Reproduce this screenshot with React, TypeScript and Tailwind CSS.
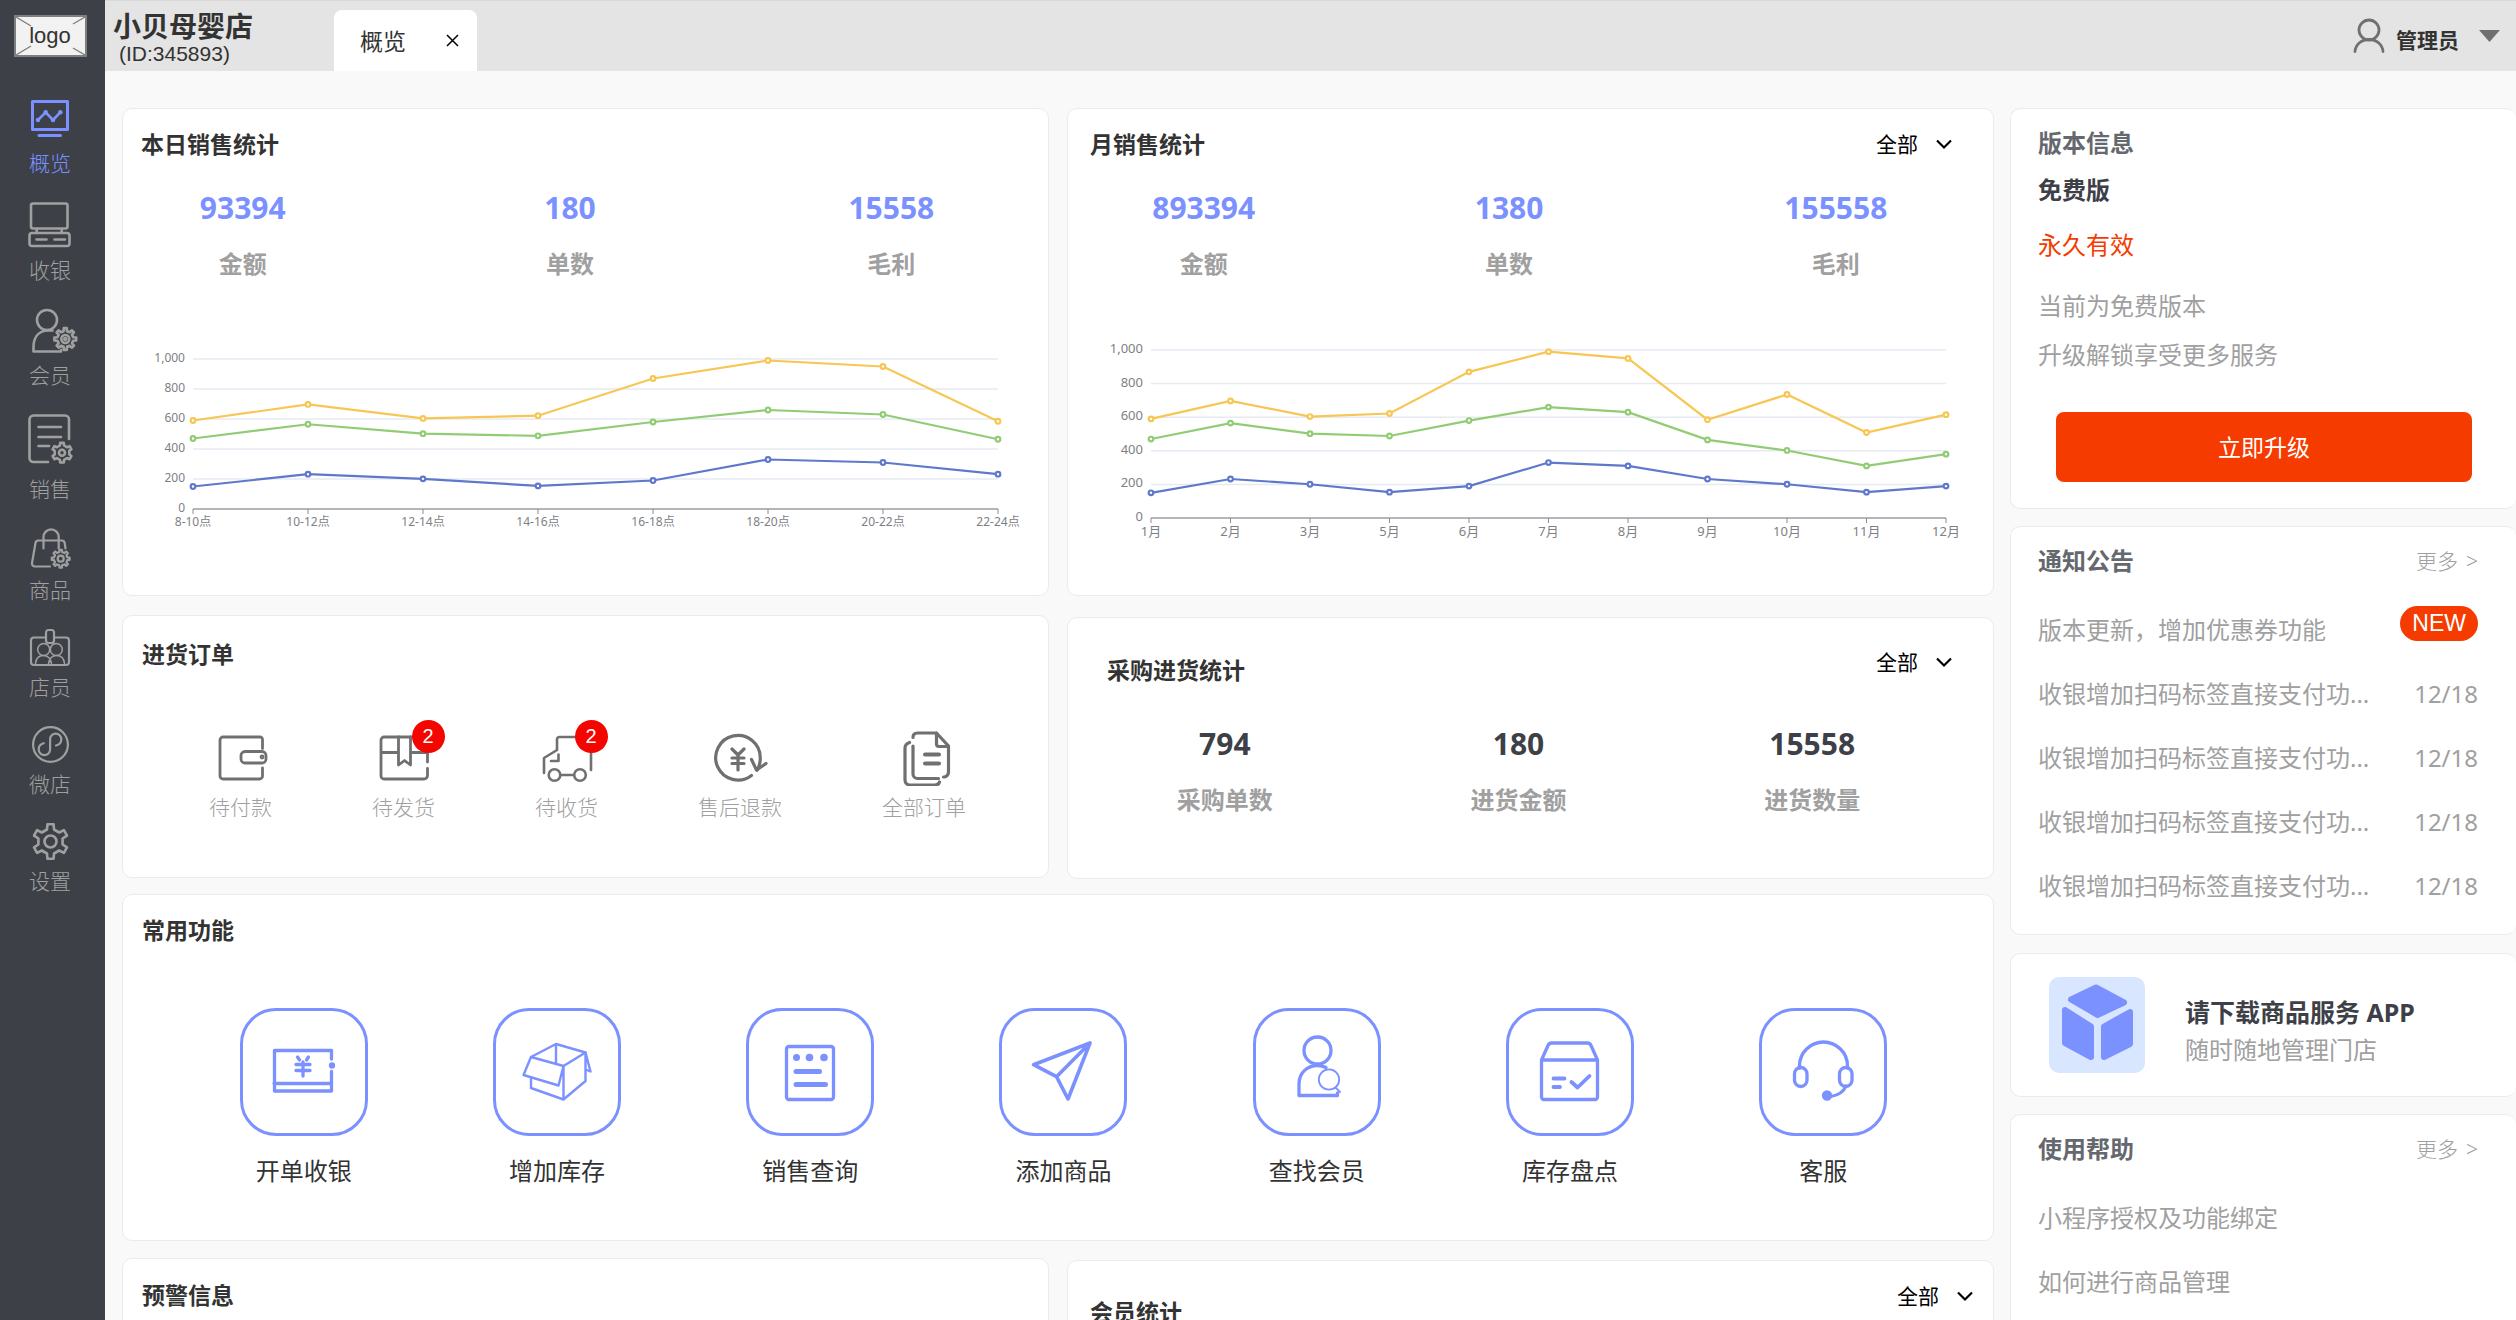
import type { ReactNode } from "react";

// Outline of a cog, one flat tooth per step
const gearPath = (
  cx: number,
  cy: number,
  outer: number,
  inner: number,
  teeth: number
) => {
  const step = (Math.PI * 2) / teeth;
  const points: string[] = [];
  for (let i = 0; i < teeth; i++) {
    const a = i * step - Math.PI / 2;
    const corners = [
      [inner, -0.27],
      [outer, -0.17],
      [outer, 0.17],
      [inner, 0.27],
    ];
    corners.forEach(([r, k]) => {
      const x = cx + r * Math.cos(a + k * step);
      const y = cy + r * Math.sin(a + k * step);
      points.push(`${x.toFixed(1)} ${y.toFixed(1)}`);
    });
  }
  return `M${points.join("L")}Z`;
};

const menus = [
  {
    name: "概览",
    height: 42,
    icon: (
      <>
        <path d="M8.5 1.5h35v28h-35z" strokeWidth="3" />
        <path d="M15 35.5h21.5" strokeWidth="3" />
        <path d="M14 20l7.7-7.7L29 20l7.3-7.7" />
        <g fill="currentColor" stroke="none">
          <circle cx="14" cy="20" r="2.3" />
          <circle cx="21.7" cy="12.3" r="2.3" />
          <circle cx="29" cy="20" r="2.3" />
          <circle cx="36.3" cy="12.3" r="2.3" />
        </g>
      </>
    ),
  },
  {
    name: "收银",
    height: 47,
    icon: (
      <>
        <rect x="7" y="1.5" width="36.5" height="25" rx="2" />
        <rect x="5.5" y="31" width="40" height="13" rx="2.5" />
        <path d="M12.7 27v4M37.7 27v4M12.5 37.5h10M30.5 37.5H41" />
      </>
    ),
  },
  {
    name: "会员",
    height: 45,
    icon: (
      <>
        <circle cx="23" cy="11" r="10" />
        <path d="M37 41v1.5H9.5V38c0-9.500 5-15.5 13-16.5h6" />
        <path d={gearPath(41.3, 30, 11, 8, 8)} />
        <circle cx="41.3" cy="30" r="4" />
        <circle cx="41.3" cy="30" r="1" />
      </>
    ),
  },
  {
    name: "销售",
    height: 54,
    icon: (
      <>
        <path d="M45 25V5.5a4 4 0 0 0-4-4H9.5a4 4 0 0 0-4 4V44a4 4 0 0 0 4 4H24" />
        <path d="M14.5 13H37M14.5 23H37M14.5 32H25" />
        <path d={gearPath(38, 38.7, 10, 7.5, 6)} />
        <circle cx="38" cy="38.7" r="3" />
      </>
    ),
  },
  {
    name: "商品",
    height: 41,
    icon: (
      <g strokeWidth="2.2">
        <path d="M41.5 20.5l-.8-5.5a3 3 0 0 0-3-2.5H14.5a3 3 0 0 0-3 2.5L8 35a3 3 0 0 0 3 3.5h15" />
        <path d="M19.5 20.5V9a7.6 7.6 0 0 1 15.2 0v11.5" />
        <path d={gearPath(36.7, 30.7, 9, 6.8, 8)} />
        <circle cx="36.7" cy="30.7" r="3" />
      </g>
    ),
  },
  {
    name: "店员",
    height: 37,
    icon: (
      <g strokeWidth="2.2">
        <path d="M21.5 8.5H10a3 3 0 0 0-3 3V33a3 3 0 0 0 3 3h32a3 3 0 0 0 3-3V11.5a3 3 0 0 0-3-3H30.5" />
        <rect x="22" y="1" width="8" height="13" rx="2.5" />
        <g strokeWidth="1.5">
          <circle cx="19.7" cy="20.5" r="6" />
          <circle cx="32.3" cy="20.5" r="6" />
          <path d="M11.5 34.5c.5-5 3.5-8 8-8s7 3 8 8M24.5 34.5c1-5 3.5-8 8-8s7.500 3 8 8" />
        </g>
      </g>
    ),
  },
  {
    name: "微店",
    height: 37,
    icon: (
      <g strokeWidth="2.2">
        <circle cx="26.5" cy="18.5" r="17.4" />
        <path d="M32 19.5c3.3-.8 5.3-3.3 5.3-6.3a5.6 5.6 0 0 0-11.2 0v10.3a5.7 5.7 0 0 1-11.4 0c0-3.2 1.800-5.5 5-6.3" />
      </g>
    ),
  },
  {
    name: "设置",
    height: 37,
    icon: (
      <>
        <path d={gearPath(26.5, 18.5, 17.5, 12.5, 6)} />
        <circle cx="26.5" cy="18.5" r="6" />
      </>
    ),
  },
];

const blue = [150, 232, 201, 154, 190, 330, 310, 232];
const green = [470, 565, 502, 488, 580, 660, 630, 465];
const yellow = [590, 697, 604, 622, 870, 990, 950, 585];

const dayChart = {
  labels: [
    "8-10点",
    "10-12点",
    "12-14点",
    "14-16点",
    "16-18点",
    "18-20点",
    "20-22点",
    "22-24点",
  ],
  series: [
    { color: "#5f78cb", data: blue },
    { color: "#91cc75", data: green },
    { color: "#f7c653", data: yellow },
  ],
};

const monthChart = {
  labels: [
    "1月",
    "2月",
    "3月",
    "5月",
    "6月",
    "7月",
    "8月",
    "9月",
    "10月",
    "11月",
    "12月",
  ],
  series: [
    { color: "#5f78cb", data: [...blue, 201, 154, 190] },
    { color: "#91cc75", data: [...green, 402, 310, 380] },
    { color: "#f7c653", data: [...yellow, 735, 509, 615] },
  ],
};

const orders = [
  {
    name: "待付款",
    icon: (
      <>
        <path d="M49.5 18.5v-9A2.5 2.5 0 0 0 47 7H10a3 3 0 0 0-3 3v36a3 3 0 0 0 3 3h36.5a3 3 0 0 0 3-3v-8" />
        <rect x="28" y="21.5" width="25" height="11.5" rx="4" />
        <circle cx="49" cy="27" r="1" />
      </>
    ),
  },
  {
    name: "待发货",
    badge: 2,
    icon: (
      <>
        <path d="M51.5 32V10a3 3 0 0 0-3-3H8a3 3 0 0 0-3 3v36a3 3 0 0 0 3 3h40a3.5 3.5 0 0 0 3.5-3.5v-7M5 22.5h17M35 22.5h16" />
        <path d="M22.5 7v28l6-4.5 6 4.5V7" />
      </>
    ),
  },
  {
    name: "待收货",
    badge: 2,
    icon: (
      <g strokeWidth="2.6">
        <path d="M52 40V10a3 3 0 0 0-3-3H20.5A2.5 2.5 0 0 0 18 9.5V20L5 28v15" />
        <path d="M19.5 24.5V31H12M22 45h12.5" />
        <circle cx="15.5" cy="45" r="5.8" />
        <circle cx="41" cy="45" r="5.8" />
      </g>
    ),
  },
  {
    name: "售后退款",
    icon: (
      <g strokeWidth="3.2">
        <path d="M39.5 45.5A22.3 22.3 0 1 1 48.3 28c0 4-.8 8-3 12" />
        <path d="M39.5 29.5l5 10.500 9.500-6.5M20 19l6 6 6-6M26 26v14M20 28h12M20 33.500h12" />
      </g>
    ),
  },
  {
    name: "全部订单",
    icon: (
      <g strokeWidth="3.2">
        <path d="M17 7.5C17 4.500 18.5 3 21.5 3H40.500L52.500 16v26a5 5 0 0 1-5 5M42.500 48.500H21.500a4.500 4.500 0 0 1-4.500-4.500V16" />
        <path d="M40.500 3v11a2.500 2.500 0 0 0 2.500 2.500h9.500M13.500 12.500c-3 1-4.500 3-4.500 5.500v32a5 5 0 0 0 5 5h25c2.500 0 4-1 4.500-3" />
        <path d="M29 24.500h14M29 33.500h14" strokeWidth="4" />
      </g>
    ),
  },
];

const actions = [
  {
    name: "开单收银",
    icon: (
      <>
        <path d="M91.5 51v-8.5h-57V83h57V63.5M34 75.5h57" />
        <circle cx="92" cy="57.5" r="1.5" />
        <path d="M57.5 49l2 3M68.5 49l-2 3M56 56.5h14M56 62.5h14M63 54v14" />
      </>
    ),
  },
  {
    name: "增加库存",
    icon: (
      <g strokeWidth="2.4">
        <path d="M63 36l29.5 8.5-22 13.5L38 49zM63 36v19" />
        <path d="M38 49l-7.5 18 35 10.5 5-19.5v33.5L38 80V70M70.5 91.5l22-18.5V44.5l5 19-5-2" />
      </g>
    ),
  },
  {
    name: "销售查询",
    icon: (
      <>
        <rect x="40.5" y="38.5" width="47" height="53" rx="2.5" />
        <g fill="currentColor" stroke="none">
          <circle cx="50.5" cy="49.5" r="3.5" />
          <circle cx="63.5" cy="49.5" r="3.8" />
          <circle cx="78" cy="49.5" r="3.8" />
        </g>
        <path d="M50 63.5h23.5M50 76.5h29.5" strokeWidth="5" />
      </>
    ),
  },
  {
    name: "添加商品",
    icon: (
      <path
        d="M91 35L34.5 56.7l23 12L69 91zM91 35L57.5 68.7"
        strokeWidth="3.6"
      />
    ),
  },
  {
    name: "查找会员",
    icon: (
      <>
        <circle cx="64.5" cy="42.5" r="13.5" />
        <path d="M73 59.5c-3-1.5-6-2-8.5-2C54 57.5 46 65 46 76v11.5h38.5V85" />
        <circle cx="76" cy="71.5" r="10.2" strokeWidth="1.8" />
        <path d="M82.5 79.5L87 84" strokeWidth="1.8" />
      </>
    ),
  },
  {
    name: "库存盘点",
    icon: (
      <>
        <path d="M35.5 52v37a2.5 2.5 0 0 0 2.5 2.5h51a2.5 2.5 0 0 0 2.5-2.5V52L85 37.5a4 4 0 0 0-3.5-2.5h-36a4 4 0 0 0-3.500 2.5zh56" />
        <path
          d="M47.5 70.5h11M47.5 79H54M65.5 74l6 5.5L83.5 68"
          strokeWidth="3.8"
        />
      </>
    ),
  },
  {
    name: "客服",
    icon: (
      <>
        <path d="M40.5 60v-2a24 24 0 0 1 48 0v2M87 78c-2 5-7 9-15 10.5" />
        <rect x="35.5" y="59.5" width="12.5" height="19" rx="6.2" />
        <rect x="80.5" y="59.5" width="12.5" height="19" rx="6.2" />
        <circle cx="68" cy="87.5" r="3.5" fill="currentColor" />
      </>
    ),
  },
];

const notices = [
  { title: "版本更新，增加优惠券功能", isNew: true },
  { title: "收银增加扫码标签直接支付功...", date: "12/18" },
  { title: "收银增加扫码标签直接支付功...", date: "12/18" },
  { title: "收银增加扫码标签直接支付功...", date: "12/18" },
  { title: "收银增加扫码标签直接支付功...", date: "12/18" },
];

const helps = [{ title: "小程序授权及功能绑定" }, { title: "如何进行商品管理" }];

type CardProps = { className?: string; children: ReactNode };

const Card = ({ className = "", children }: CardProps) => (
  <section
    className={`rounded-[10px] border border-[#ebebeb] bg-white ${className}`}
  >
    {children}
  </section>
);

const Title = ({ className = "", children }: CardProps) => (
  <h2 className={`text-[23px] leading-8 font-bold text-[#333] ${className}`}>
    {children}
  </h2>
);

const RangeSelect = ({ label }: { label: string }) => (
  <div className="relative text-black">
    <select
      aria-label={label}
      className="block w-[76px] appearance-none bg-transparent text-[21px] leading-8"
    >
      <option>全部</option>
    </select>
    <svg
      className="pointer-events-none absolute top-2 right-0 h-4 w-4"
      viewBox="0 0 16 16"
      fill="none"
      stroke="currentColor"
      strokeWidth="2.2"
    >
      <path d="M1 4.5l7 7 7-7" />
    </svg>
  </div>
);

type StatsProps = {
  items: string[][];
  className: string;
  color: string;
};

const Stats = ({ items, className, color }: StatsProps) => (
  <dl className={`grid text-center font-bold ${className}`}>
    {items.map(([label, value]) => (
      <div key={label} className="flex flex-col-reverse gap-[22px]">
        <dt className="text-2xl leading-8 text-[#a0a0a0]">{label}</dt>
        <dd className={`text-3xl leading-9 ${color}`}>{value}</dd>
      </div>
    ))}
  </dl>
);

type ChartProps = {
  labels: string[];
  series: { color: string; data: number[] }[];
  left: number;
  right: number;
  top: number;
  bottom: number;
  fontSize: number;
  title: string;
};

const LineChart = ({
  labels,
  series,
  left,
  right,
  top,
  bottom,
  fontSize,
  title,
}: ChartProps) => {
  const x = (i: number) => left + (i * (right - left)) / (labels.length - 1);
  const y = (v: number) => bottom - (v * (bottom - top)) / 1000;
  return (
    <svg
      viewBox="0 0 925 315"
      className="block w-full"
      role="img"
      aria-label={title}
    >
      {[0, 200, 400, 600, 800, 1000].map((v) => (
        <g key={v}>
          <path
            d={`M${left} ${y(v)}H${right}`}
            stroke={v === 0 ? "#9b9da3" : "#e6eaf3"}
            strokeWidth="1.5"
          />
          <text
            x={left - 8}
            y={y(v) + 3}
            fontSize={fontSize}
            fill="#7d7f86"
            textAnchor="end"
          >
            {v.toLocaleString("en-US")}
          </text>
        </g>
      ))}
      {labels.map((label, i) => (
        <g key={label}>
          <path d={`M${x(i)} ${bottom}v5`} stroke="#8b8d94" />
          <text
            x={x(i)}
            y={bottom + fontSize + 5}
            fontSize={fontSize}
            fill="#7d7f86"
            textAnchor="middle"
          >
            {label}
          </text>
        </g>
      ))}
      {series.map(({ color, data }) => (
        <g key={color} stroke={color} fill="none" strokeWidth="2.2">
          <polyline points={data.map((v, i) => `${x(i)},${y(v)}`).join(" ")} />
          {data.map((v, i) => (
            <circle key={i} cx={x(i)} cy={y(v)} r="2.3" fill="#fff" />
          ))}
        </g>
      ))}
    </svg>
  );
};

const Sidebar = () => (
  <aside className="w-[105px] shrink-0 bg-[#3d4047] pr-[5px] text-[#a0a0a0]">
    <div className="relative mx-auto mt-[15px] flex h-[42px] w-[73px] items-center justify-center border-2 border-[#7f7f7f] bg-[#f2f2f2]">
      <svg
        className="absolute inset-0 h-full w-full"
        viewBox="0 0 69 38"
        stroke="#7f7f7f"
        strokeWidth="1.3"
      >
        <path d="M0 0l15 9M69 0L57 7M0 38l15-9M69 38l-12-7" />
      </svg>
      <span className="relative font-['Liberation_Sans',Arial,sans-serif] text-[22px] leading-6 text-[#333]">
        logo
      </span>
    </div>
    <nav className="mt-[43px] flex flex-col gap-[27px]">
      {menus.map((menu, i) => (
        <a
          key={menu.name}
          href="#"
          className={`flex flex-col items-center gap-[9px] ${
            i === 0 ? "text-[#7b91ff]" : ""
          }`}
        >
          <svg
            className="overflow-visible"
            width="50"
            height={menu.height}
            viewBox={`1 0 50 ${menu.height}`}
            fill="none"
            stroke="currentColor"
            strokeWidth="2.6"
            strokeLinecap="round"
            strokeLinejoin="round"
          >
            {menu.icon}
          </svg>
          <span className="text-[21px] leading-6 font-light">{menu.name}</span>
        </a>
      ))}
    </nav>
  </aside>
);

const Header = () => (
  <header className="flex h-[71px] items-stretch border-t border-[#d9d9d9] bg-[#e4e4e4] text-[#333]">
    <div className="w-[229px] pt-[9px] pl-2">
      <h1 className="text-[28px] leading-8 font-bold">小贝母婴店</h1>
      <p className="pl-1.5 font-['Liberation_Sans',Arial,sans-serif] text-[21px] leading-6">
        (ID:345893)
      </p>
    </div>
    <div className="mt-[9px] flex w-[143px] items-center justify-between rounded-t-lg bg-white pr-[18px] pl-[26px]">
      <a href="#" className="text-[23px] leading-8">
        概览
      </a>
      <button type="button" aria-label="关闭" className="text-black">
        <svg
          width="13"
          height="13"
          viewBox="0 0 13 13"
          stroke="currentColor"
          strokeWidth="1.5"
        >
          <path d="M1 1l11 11M12 1L1 12" />
        </svg>
      </button>
    </div>
    <button
      type="button"
      className="ml-auto flex items-center pt-2 pr-4 text-[21px] leading-8 font-bold"
    >
      <svg
        className="mr-2.5 mb-2"
        width="34"
        height="36"
        viewBox="0 0 34 36"
        fill="none"
        stroke="#707070"
        strokeWidth="2.8"
        strokeLinecap="round"
      >
        <circle cx="17" cy="12" r="10" />
        <path d="M3 33.5C3.5 27 9 21.5 17 21.5s13.5 5.5 14 12" />
      </svg>
      管理员
      <svg
        className="mb-2 ml-5"
        width="21"
        height="12"
        viewBox="0 0 21 12"
        fill="#707070"
      >
        <path d="M0 0h21L10.5 12z" />
      </svg>
    </button>
  </header>
);

type LinkCardProps = {
  title: string;
  items: { title: string; date?: string; isNew?: boolean }[];
  className: string;
};

const LinkCard = ({ title, items, className }: LinkCardProps) => (
  <Card className={`border-r-0 pt-[18px] pr-[38px] pl-[27px] ${className}`}>
    <div className="flex justify-between">
      <h2 className="text-2xl leading-8 font-bold text-[#65686e]">{title}</h2>
      <a
        href="#"
        className="flex gap-2 text-[21px] leading-8 font-light text-[#a0a0a0]"
      >
        更多 <span>&gt;</span>
      </a>
    </div>
    <ul className="mt-[21px] text-2xl text-[#a0a0a0]">
      {items.map((item, i) => (
        <li key={i} className="flex h-16 justify-between">
          <a href="#" className="self-center leading-8">
            {item.title}
          </a>
          {item.isNew && (
            <span className="mt-2 h-[35px] rounded-full bg-[#f53b00] px-3 font-['Liberation_Sans',Arial,sans-serif] text-[23px] leading-[35px] text-white">
              NEW
            </span>
          )}
          {item.date && (
            <time className="self-center leading-8">{item.date}</time>
          )}
        </li>
      ))}
    </ul>
  </Card>
);

const App = () => {
  return (
    <div
      lang="zh-CN"
      className="flex h-screen overflow-hidden bg-[#f9f9f9] font-['Noto_Sans','Noto_Sans_CJK_SC',sans-serif]"
    >
      <Sidebar />
      <div className="min-w-0 flex-1">
        <Header />
        <main className="flex gap-4 pt-[37px] pl-[17px]">
          <div className="min-w-0 flex-1">
            <div className="grid grid-cols-2 gap-x-[18px]">
              <Card>
                <Title className="pt-[19px] pl-[18px]">本日销售统计</Title>
                <Stats
                  className="mt-[30px] grid-cols-[240fr_416fr_228fr_43fr]"
                  color="text-[#7b91ff]"
                  items={[
                    ["金额", "93394"],
                    ["单数", "180"],
                    ["毛利", "15558"],
                  ]}
                />
                <LineChart
                  {...dayChart}
                  title="本日销售统计"
                  left={70}
                  right={875}
                  top={79}
                  bottom={229}
                  fontSize={12}
                />
              </Card>
              <Card>
                <div className="flex items-start justify-between pt-[19px] pr-[41px] pl-[22px]">
                  <Title>月销售统计</Title>
                  <RangeSelect label="月销售统计范围" />
                </div>
                <Stats
                  className="mt-[30px] grid-cols-[272fr_340fr_315fr]"
                  color="text-[#7b91ff]"
                  items={[
                    ["金额", "893394"],
                    ["单数", "1380"],
                    ["毛利", "155558"],
                  ]}
                />
                <LineChart
                  {...monthChart}
                  title="月销售统计"
                  left={83}
                  right={878}
                  top={70}
                  bottom={238}
                  fontSize={13}
                />
              </Card>
            </div>

            <div className="mt-[19px] grid grid-cols-2 items-start gap-x-[18px]">
              <Card>
                <Title className="pt-[22px] pl-[19px]">进货订单</Title>
                <div className="mt-[60px] flex gap-[100px] pb-[58px] pl-[86px]">
                  {orders.map((order) => (
                    <a
                      key={order.name}
                      href="#"
                      className="flex flex-col items-center gap-[9px] text-[21px] leading-6 font-light text-[#a0a0a0]"
                    >
                      <span className="relative text-[#707070]">
                        <svg
                          className="block"
                          width="56"
                          height="56"
                          viewBox="0 0 56 56"
                          fill="none"
                          stroke="currentColor"
                          strokeWidth="2.8"
                          strokeLinecap="round"
                          strokeLinejoin="round"
                        >
                          {order.icon}
                        </svg>
                        {order.badge && (
                          <span className="absolute -top-2.5 left-9 h-[33px] w-[33px] rounded-full bg-[#f50500] text-center font-['Liberation_Sans',Arial,sans-serif] text-xl leading-[33px] font-normal text-white">
                            {order.badge}
                          </span>
                        )}
                      </span>
                      {order.name}
                    </a>
                  ))}
                </div>
              </Card>
              <Card className="mt-0.5">
                <div className="flex items-start justify-between pt-7 pr-[41px] pl-[39px]">
                  <Title className="pt-2">采购进货统计</Title>
                  <RangeSelect label="采购进货统计范围" />
                </div>
                <Stats
                  className="mt-10 grid-cols-3 pr-[34px] pb-[62px] pl-2.5"
                  color="text-[#3d4047]"
                  items={[
                    ["采购单数", "794"],
                    ["进货金额", "180"],
                    ["进货数量", "15558"],
                  ]}
                />
              </Card>
            </div>

            <Card className="mt-[15px]">
              <Title className="pt-[19px] pl-[19px]">常用功能</Title>
              <div className="mt-[62px] grid grid-cols-7 pr-[43px] pb-[53px] pl-[54px]">
                {actions.map((action) => (
                  <a
                    key={action.name}
                    href="#"
                    className="flex flex-col items-center gap-[19px] text-2xl leading-8 text-[#333]"
                  >
                    <span className="rounded-[36px] border-[3px] border-[#7b91ff] text-[#7b91ff]">
                      <svg
                        className="block"
                        width="122"
                        height="122"
                        viewBox="3 3 122 122"
                        fill="none"
                        stroke="currentColor"
                        strokeWidth="3.3"
                        strokeLinecap="round"
                        strokeLinejoin="round"
                      >
                        {action.icon}
                      </svg>
                    </span>
                    {action.name}
                  </a>
                ))}
              </div>
            </Card>

            <div className="mt-[17px] grid grid-cols-2 items-start gap-x-[18px]">
              <Card className="pb-40">
                <Title className="pt-5 pl-[19px]">预警信息</Title>
              </Card>
              <Card className="mt-0.5 pb-40">
                <div className="flex items-start justify-between pt-[19px] pr-5 pl-[22px]">
                  <Title className="pt-4">会员统计</Title>
                  <RangeSelect label="会员统计范围" />
                </div>
              </Card>
            </div>
          </div>

          <div className="w-[506px] shrink-0">
            <Card className="border-r-0 pt-[18px] pr-11 pb-[26px] pl-[27px] text-2xl leading-8 text-[#a0a0a0]">
              <h2 className="leading-8 font-bold text-[#65686e]">版本信息</h2>
              <p className="mt-[15px] leading-8 font-bold text-[#3d4047]">
                免费版
              </p>
              <p className="mt-[23px] leading-8 text-[#f53b00]">永久有效</p>
              <p className="mt-[29px] leading-8">当前为免费版本</p>
              <p className="mt-[17px] leading-8">升级解锁享受更多服务</p>
              <div className="mt-[41px] pl-[18px]">
                <button
                  type="button"
                  className="block h-[70px] w-full rounded-lg bg-[#f53b00] text-[23px] text-white"
                >
                  立即升级
                </button>
              </div>
            </Card>

            <LinkCard
              className="mt-[17px] pb-4"
              title="通知公告"
              items={notices}
            />

            <Card className="mt-[18px] flex h-36 items-center gap-10 border-r-0 pl-[38px]">
              <svg width="96" height="96" viewBox="0 0 96 96">
                <rect width="96" height="96" rx="10" fill="#d9e6ff" />
                <g
                  fill="#7b91ff"
                  stroke="#7b91ff"
                  strokeWidth="6"
                  strokeLinejoin="round"
                >
                  <path d="M47 10.5l28 15L48.5 38 22 22.5z" />
                  <path d="M16 33l26 16.5V80L16 66z" />
                  <path d="M81 35L55 49.5V80l26-13z" />
                </g>
              </svg>
              <div className="pt-3">
                <h2 className="text-[25px] leading-[38px] font-bold text-[#3d4047]">
                  请下载商品服务 APP
                </h2>
                <p className="text-2xl leading-[38px] text-[#a0a0a0]">
                  随时随地管理门店
                </p>
              </div>
            </Card>

            <LinkCard
              className="mt-[17px] pb-40"
              title="使用帮助"
              items={helps}
            />
          </div>
        </main>
      </div>
    </div>
  );
};

export default App;
